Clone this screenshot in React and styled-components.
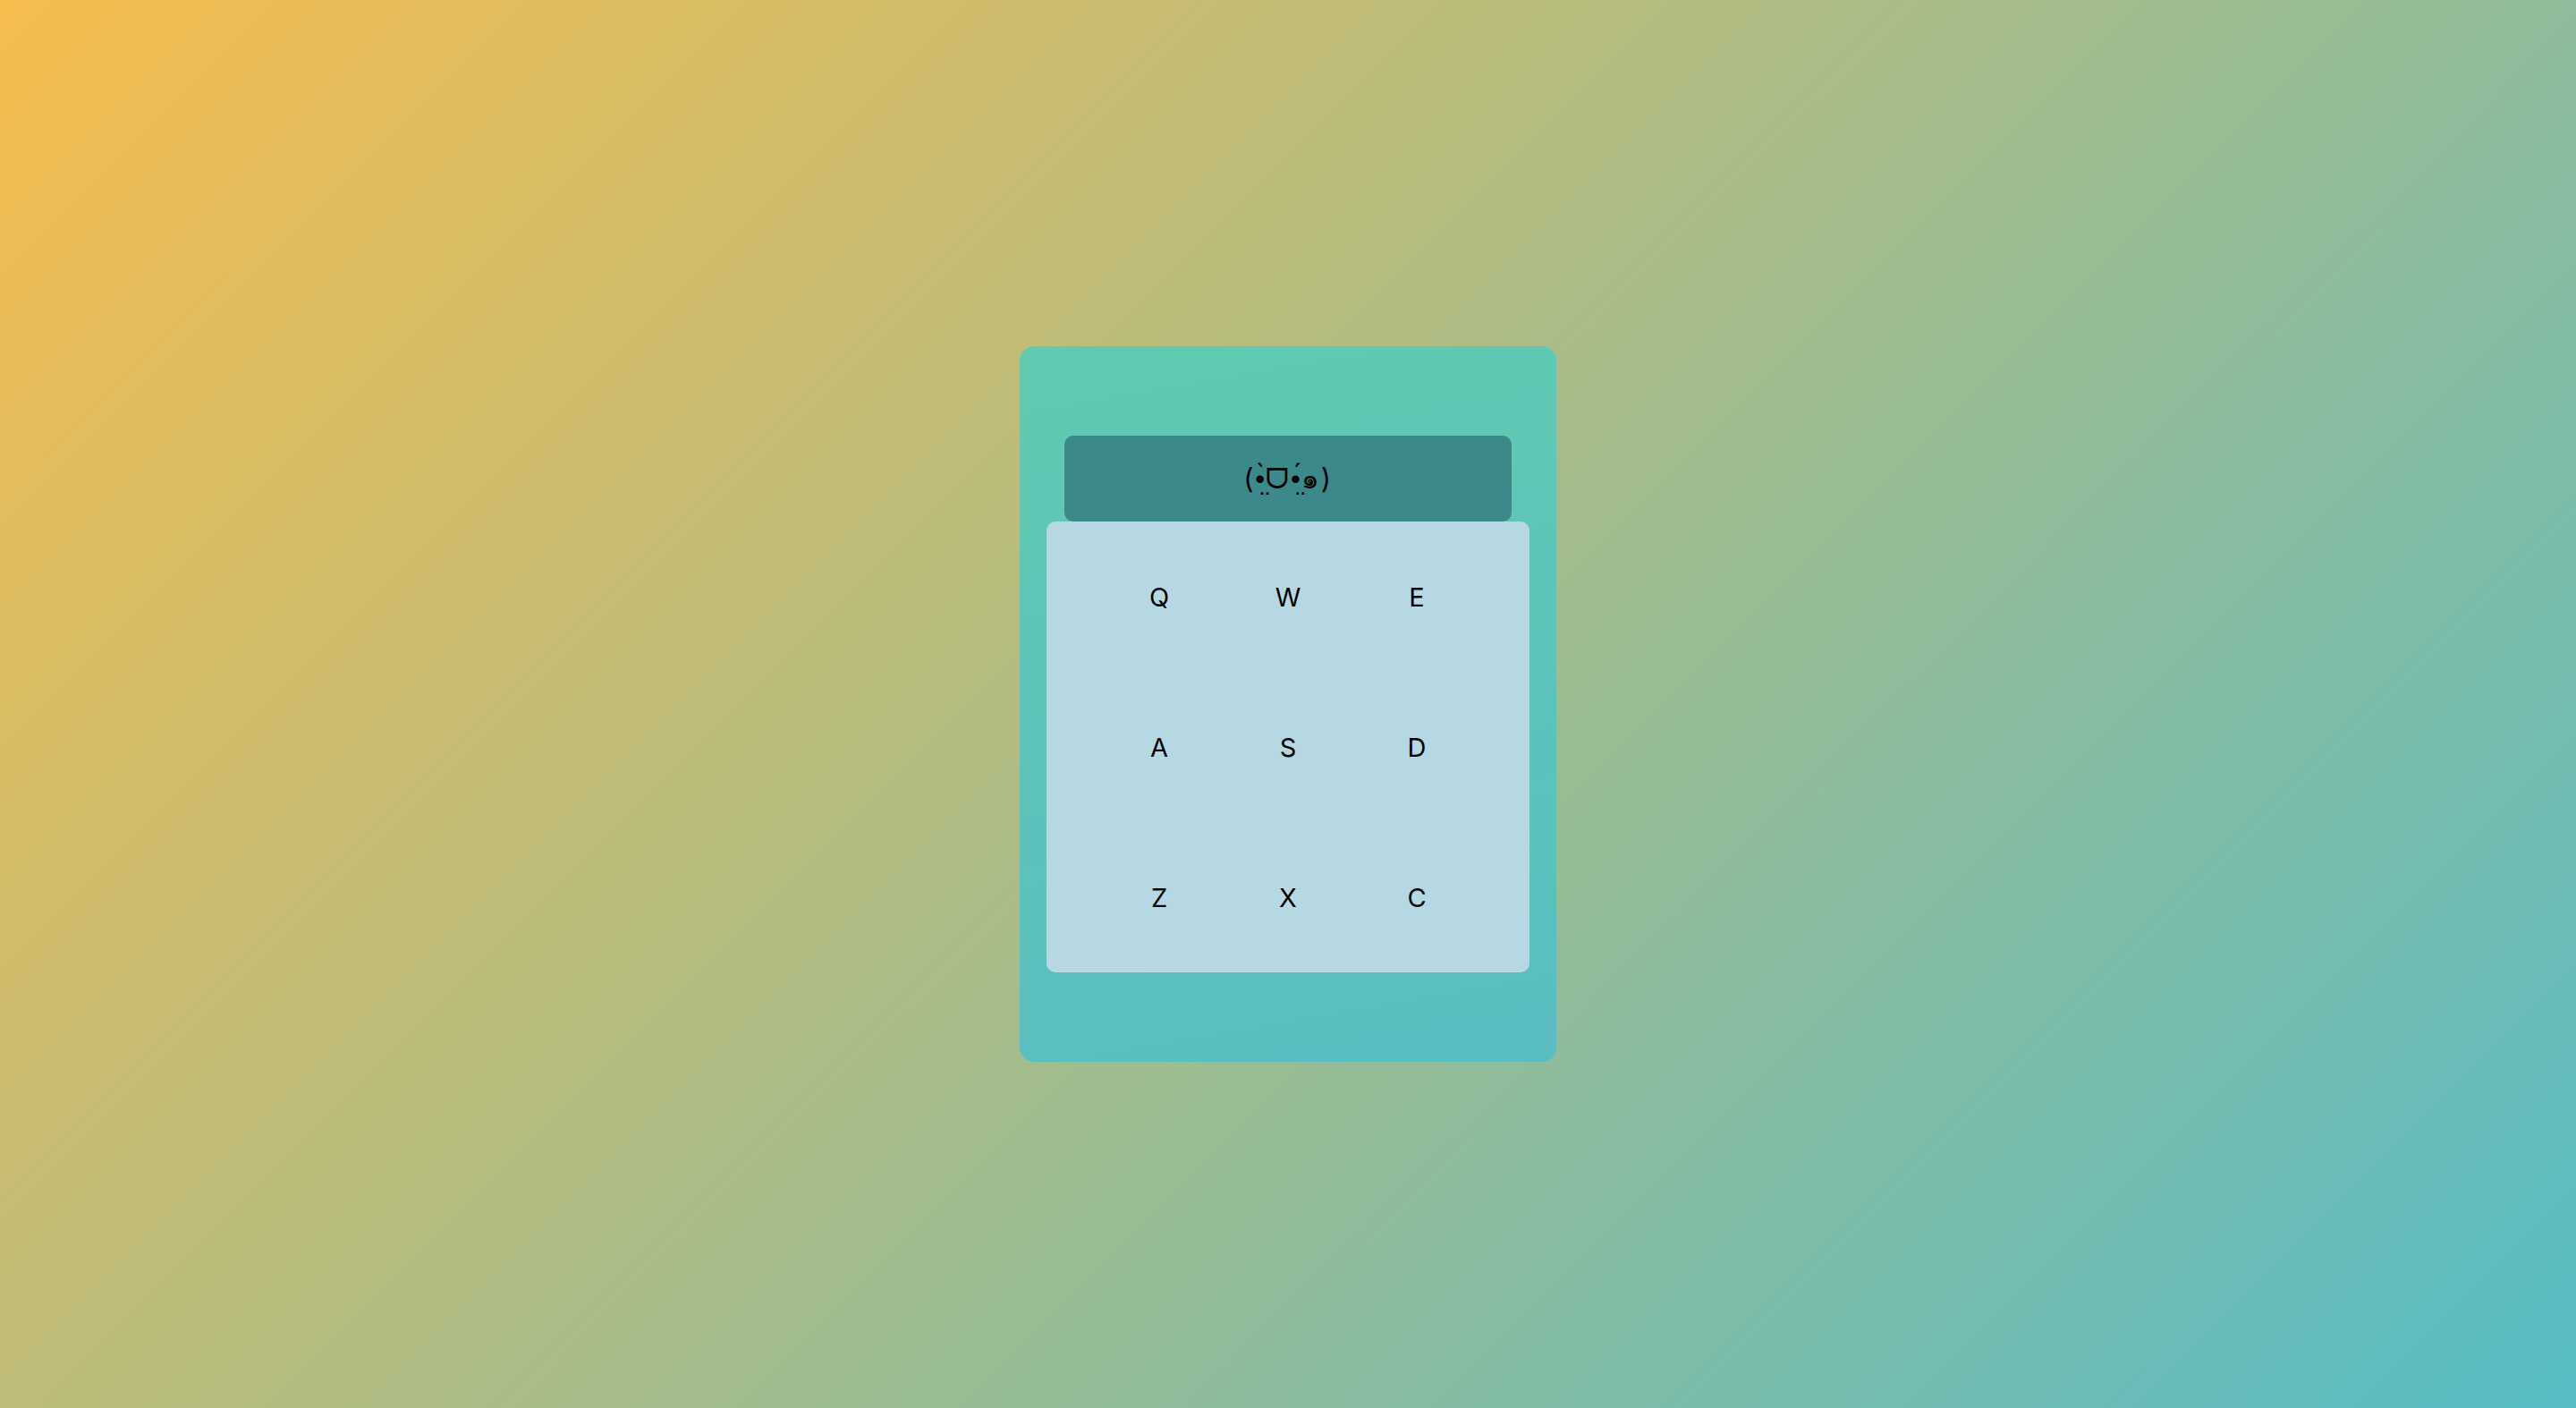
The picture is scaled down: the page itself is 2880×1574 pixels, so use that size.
import React from 'react';
import styled, { createGlobalStyle } from 'styled-components';

const GlobalStyle = createGlobalStyle`
  html, body {
    margin: 0;
    padding: 0;
    height: 100%;
  }
  body {
    font-family: Inter, "Liberation Sans", sans-serif;
  }
  #root {
    height: 100%;
  }
`;

const Page = styled.div`
  display: flex;
  align-items: center;
  justify-content: center;
  width: 100%;
  height: 100vh;
  background: linear-gradient(135deg, #f7bd4e 0%, #57bcc5 100%);
`;

const Card = styled.div`
  box-sizing: border-box;
  width: 600px;
  height: 800px;
  padding: 100px 30px;
  border-radius: 16px;
  background: linear-gradient(170deg, #61cab1 0%, #58bec2 100%);
  display: flex;
  flex-direction: column;
  align-items: center;
`;

const Display = styled.div`
  width: 500px;
  height: 96px;
  border-radius: 10px;
  background: #3c898a;
  display: flex;
  align-items: center;
  justify-content: center;
  font-size: 31px;
  letter-spacing: 1.5px;
  color: #000;
`;

const Keyboard = styled.div`
  width: 540px;
  height: 504px;
  border-radius: 10px;
  background: #b6d8e3;
  display: grid;
  grid-template-columns: repeat(3, 144px);
  grid-template-rows: repeat(3, 1fr);
  justify-content: center;
`;

const Key = styled.div`
  display: flex;
  align-items: center;
  justify-content: center;
  font-size: 29px;
  color: #000;
  cursor: pointer;
`;

const keys = ['Q', 'W', 'E', 'A', 'S', 'D', 'Z', 'X', 'C'];

const App = () => (
  <>
    <GlobalStyle />
    <Page>
      <Card>
        <Display>(•̤̀ᗜ•̤́๑)</Display>
        <Keyboard>
          {keys.map((k) => (
            <Key key={k}>{k}</Key>
          ))}
        </Keyboard>
      </Card>
    </Page>
  </>
);

export default App;
